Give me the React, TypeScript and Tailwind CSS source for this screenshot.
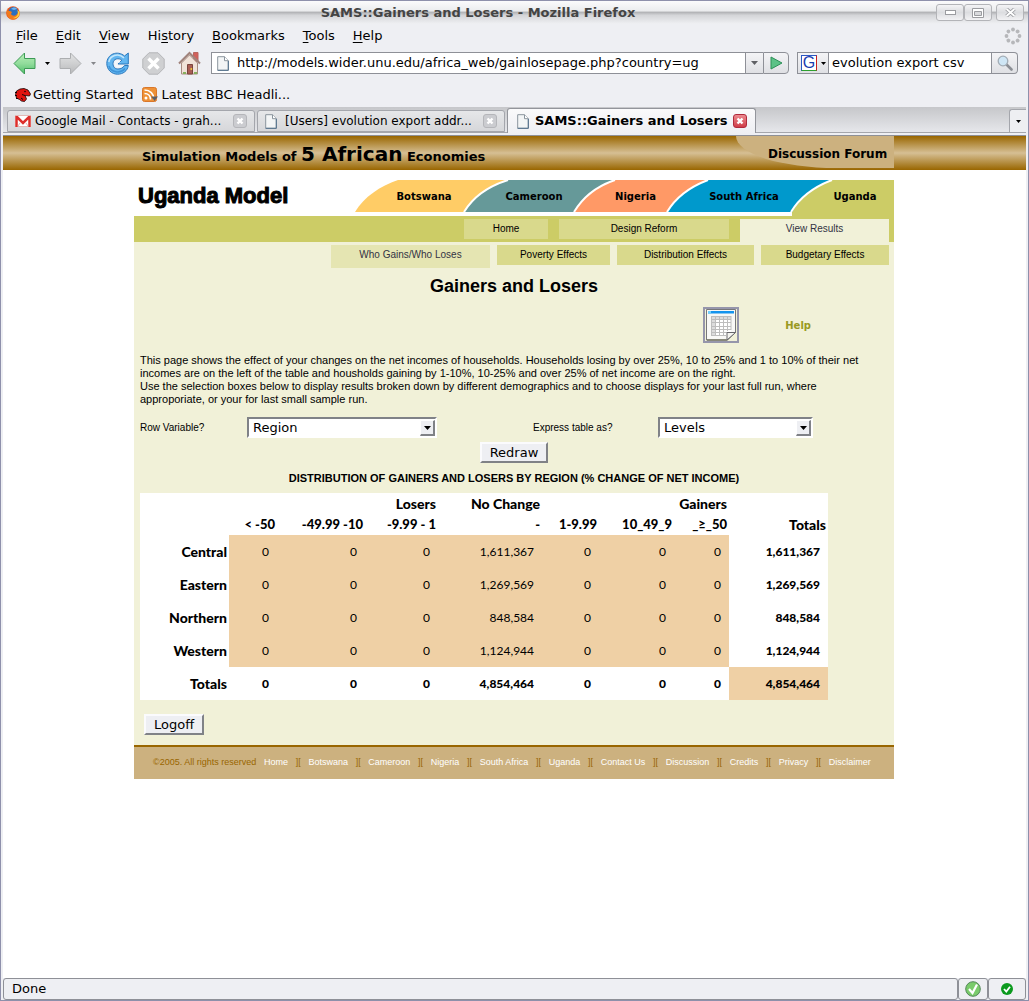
import React from "react";

const UI = "font-['DejaVu_Sans',sans-serif]";
const ARIAL = "font-['Liberation_Sans',Arial,sans-serif]";

function Caret({ className }: { className: string }) {
  return (
    <svg viewBox="0 0 7 4" className={className} aria-hidden="true">
      <path d="M0 0h7L3.500 4z" fill="currentColor" />
    </svg>
  );
}

function FirefoxIcon() {
  return (
    <svg viewBox="0 0 14 14" className="size-[14px]" aria-hidden="true">
      <circle cx="7" cy="7" r="6.800" fill="#e8541a" />
      <circle cx="7.400" cy="5.800" r="4.800" fill="#2a6fc0" />
      <path d="M5 3c2-2 5-2 6 0l-3 1z" fill="#6db4ee" />
      <path d="M1 3c0 2 1 2 3 2l2 1-1 2c1 2 4 2 5 1 2-1 2-3 2-5 2 3 1 6-1 8s-6 2-8 0S0 6 1 3z" fill="#f07a1c" />
      <path d="M11 4c2 3 1 7-4 8 4 1 7-2 6.500-6z" fill="#ffd23a" />
    </svg>
  );
}

function ArrowIcon({ forward }: { forward?: boolean }) {
  const id = forward ? "fwd" : "back";
  return (
    <svg viewBox="0 0 23 23" className={forward ? "h-[23px] w-[23px] -scale-x-100" : "h-[23px] w-[23px]"} aria-hidden="true">
      <defs>
        <linearGradient id={id} x1="0" y1="0" x2="0" y2="1">
          <stop offset="0" stopColor={forward ? "#e2e3e4" : "#b7efb5"} />
          <stop offset="0.500" stopColor={forward ? "#cfd0d1" : "#92dc9c"} />
          <stop offset="1" stopColor={forward ? "#b7b8ba" : "#4fbf69"} />
        </linearGradient>
      </defs>
      <path d="M11.500 1v5.500h10.500v10H11.500V22L1 11.500z" fill={`url(#${id})`} stroke={forward ? "#acaeb0" : "#3c9a55"} />
    </svg>
  );
}

function ReloadIcon() {
  return (
    <svg viewBox="0 0 23 23" className="size-[23px]" aria-hidden="true">
      <path d="M22.300 1v11H12l3.800-3.800C13 5.500 7 6.500 7 11.500c0 4 2.500 5.500 5 5.500 3 0 5-1.200 6.500-3.500h3.800C21.500 19 17 22.200 11.500 22.200 5.500 22.200.8 17.500.8 11.500.8 2 11.500-2 18.500 4z" fill="#62b6f0" stroke="#2b78bd" />
      <path d="M2.800 10C4 3.500 12 .5 18 5.800" fill="none" stroke="#c3e6fb" strokeWidth="1.600" />
      <path d="M3 14c2 6 11 8.500 16 2.500" fill="none" stroke="#3d93d8" strokeWidth="1.600" />
      <path d="M8.500 11.500c0-4 5-4 6-1h-2.500c-2-1-2 3 0 3h5c-2 3-8.500 3-8.500-2z" fill="#f2f8fd" />
    </svg>
  );
}

function StopIcon() {
  return (
    <svg viewBox="0 0 23 23" className="size-[23px]" aria-hidden="true">
      <path d="M7 .8h9L22.200 7v9L16 22.200H7L.8 16V7z" fill="#cfd0d2" stroke="#b4b5b8" />
      <path d="M6.500 6.500l10 10M16.500 6.500l-10 10" stroke="#fff" strokeWidth="3.500" />
    </svg>
  );
}

function HomeIcon() {
  return (
    <svg viewBox="0 0 23 24" className="h-6 w-[23px]" aria-hidden="true">
      <path d="M15.500 1.500h4.500v9h-4.500z" fill="#d2605a" stroke="#b8655f" />
      <path d="M3.500 12L11.500 4l8 8v11h-16z" fill="#f0e2d8" stroke="#a88c80" />
      <path d="M1 12.500L11.500 2l10.500 10.500" fill="none" stroke="#a0837b" strokeWidth="2" />
      <path d="M9.500 13.500h5v9.500h-5z" fill="#a85d53" stroke="#7a443c" />
      <circle cx="13.300" cy="18" r="1" fill="#f2d13a" />
      <path d="M5 22h3M16 22h3" stroke="#86b05d" strokeWidth="2" />
    </svg>
  );
}

function PageIcon() {
  return (
    <svg viewBox="0 0 12 15" className="h-[15px] w-3 shrink-0" aria-hidden="true">
      <path d="M.7.7h6.800l3.800 4v9.600H.7z" fill="#f3f5f6" stroke="#8a949d" />
      <path d="M7.500.7v4h3.800" fill="#fff" stroke="#8a949d" />
      <path d="M11.300 5v9.300H.7" fill="none" stroke="#50708c" />
    </svg>
  );
}

function DinoIcon() {
  return (
    <svg viewBox="0 0 16 14" className="h-[14px] w-4" aria-hidden="true">
      <path d="M1.500 3L5 1l4-.5 4 1.500 2.500 4-1 2-4.500-.5L11.500 11l-2 2.500-3-.5-2-1.500L1.500 10 .5 6.500z" fill="#e0140f" stroke="#160404" strokeWidth="0.800" />
      <circle cx="10" cy="3.500" r="0.800" fill="#160404" />
      <path d="M0 4.500h2M0 7.500h2M1 10.500h2M10 7.500l-3-1M6 10l2 1.500" stroke="#160404" />
    </svg>
  );
}

function FeedIcon() {
  return (
    <svg viewBox="0 0 16 15" className="h-[15px] w-4" aria-hidden="true">
      <rect x="0.500" y="0.500" width="14" height="14" rx="2" fill="#ee9136" stroke="#d9772a" />
      <circle cx="4" cy="11" r="1.500" fill="#fff" />
      <path d="M2.500 6.500c3.500 0 6 2.500 6 6M2.500 3c5.500 0 9.500 4 9.500 9.500" fill="none" stroke="#fff" strokeWidth="1.600" />
      <path d="M9 9.500h7l-3.500 4.500z" fill="#5c5f66" />
    </svg>
  );
}

function MailIcon() {
  return (
    <svg viewBox="0 0 16 12" className="h-3 w-4 shrink-0" aria-hidden="true">
      <path d="M0 0h16v12H0z" fill="#fff" />
      <path d="M1.500 12V1.500L8 8l6.500-6.500V12" fill="none" stroke="#dd2f2b" strokeWidth="2.500" />
      <path d="M0 .5h16M3 11.500h10M5 8l-2 3M11 8l2 3" stroke="#e3b9b6" />
    </svg>
  );
}

function TabClose({ active, label }: { active?: boolean; label: string }) {
  return (
    <button
      type="button"
      aria-label={label}
      className={
        active
          ? "flex size-[14px] shrink-0 items-center justify-center rounded-[3px] border border-[#b02a3c] bg-linear-to-b from-[#ec8a90] to-[#cf3b48]"
          : "flex size-[14px] shrink-0 items-center justify-center rounded-[3px] border border-[#b5b6ba] bg-[#cbccd0]"
      }
    >
      <svg viewBox="0 0 8 8" className="size-2" aria-hidden="true">
        <path d="M1.500 1.500l5 5M6.500 1.500l-5 5" stroke="#fff" strokeWidth="2.400" />
      </svg>
    </button>
  );
}

function TitleBar() {
  const btn = "flex h-[17px] w-7 items-center justify-center rounded-[3px] border border-[#b3b4b8] bg-linear-to-b from-[#f4f4f6] via-[#dcdde0] to-[#f2f2f4] text-[#9b9ca0]";
  return (
    <header className="flex h-[23px] items-center bg-[linear-gradient(to_bottom,#fbfbfc_0%,#ebecee_42%,#b4b5b8_50%,#d4d5d8_62%,#eff0f3_100%)] pr-1 pl-[5px]">
      <FirefoxIcon />
      <h1 className="flex-1 text-center text-[13px] leading-[21px] font-bold text-[#444]">SAMS::Gainers and Losers - Mozilla Firefox</h1>
      <div className="flex">
        <button type="button" aria-label="Minimize" className={btn}>
          <svg viewBox="0 0 11 5" className="h-[5px] w-[11px]"><rect x="0.500" y="0.500" width="10" height="4" fill="#fff" stroke="currentColor" /></svg>
        </button>
        <button type="button" aria-label="Maximize" className={btn}>
          <svg viewBox="0 0 12 10" className="h-[10px] w-3"><path d="M.5.5h11v9H.5z" fill="#fff" stroke="currentColor" /><path d="M2.500 3.500h7v4h-7z" fill="#d9dadd" stroke="currentColor" /></svg>
        </button>
        <button type="button" aria-label="Close" className={`${btn} ml-1`}>
          <svg viewBox="0 0 11 9" className="h-[9px] w-[11px]"><path d="M1.500 1l8 7M9.500 1l-8 7" stroke="currentColor" strokeWidth="3.600" /><path d="M1.500 1l8 7M9.500 1l-8 7" stroke="#fff" strokeWidth="1.800" /></svg>
        </button>
      </div>
    </header>
  );
}

const MENUS = [
  ["", "F", "ile"],
  ["", "E", "dit"],
  ["", "V", "iew"],
  ["Hi", "s", "tory"],
  ["", "B", "ookmarks"],
  ["", "T", "ools"],
  ["", "H", "elp"],
];

function MenuBar() {
  return (
    <nav className="flex h-[23px] items-center justify-between pr-1 pl-[13px]">
      <div className="flex gap-[18px]">
        {MENUS.map(([a, b, c]) => (
          <button type="button" key={b + c}>
            {a}
            <span className="underline underline-offset-2">{b}</span>
            {c}
          </button>
        ))}
      </div>
      <svg viewBox="0 0 18 18" className="size-[18px]" aria-hidden="true">
        {[0, 45, 90, 135, 180, 225, 270, 315].map((a) => (
          <circle key={a} cx="9" cy="2.500" r="1.900" fill="#b6b7ba" transform={`rotate(${a} 9 9)`} />
        ))}
      </svg>
    </nav>
  );
}

function Toolbar() {
  const face = "border-[#8e9097] bg-linear-to-b from-[#f4f4f6] to-[#dfe0e4]";
  return (
    <div className="flex h-8 items-center pr-2 pl-[10px]">
      <button type="button" aria-label="Back"><ArrowIcon /></button>
      <button type="button" aria-label="Back history" className="ml-[9px] text-black"><Caret className="h-[3px] w-[5px]" /></button>
      <button type="button" aria-label="Forward" className="ml-[9px]"><ArrowIcon forward /></button>
      <button type="button" aria-label="Forward history" className="ml-[9px] text-[#85868a]"><Caret className="h-[3px] w-[5px]" /></button>
      <button type="button" aria-label="Reload" className="ml-[10px]"><ReloadIcon /></button>
      <button type="button" aria-label="Stop" className="ml-[13px]"><StopIcon /></button>
      <button type="button" aria-label="Home" className="ml-[13px]"><HomeIcon /></button>
      <div className="ml-[10px] flex h-[22px] flex-1">
        <div className="flex flex-1 items-center gap-2 border border-[#8e9097] bg-white px-[5px]">
          <PageIcon />
          <input aria-label="Address" className="min-w-0 flex-1 outline-none" defaultValue="http://models.wider.unu.edu/africa_web/gainlosepage.php?country=ug" />
        </div>
        <button type="button" aria-label="Address history" className={`flex w-[17px] items-center justify-center border-y text-[#5f6064] ${face}`}>
          <Caret className="h-1 w-[7px]" />
        </button>
        <button type="button" aria-label="Go" className={`flex w-[26px] items-center justify-center rounded-r-[4px] border ${face}`}>
          <svg viewBox="0 0 13 14" className="h-[14px] w-[13px]"><path d="M1 1l11 6L1 13z" fill="#5cc287" stroke="#2c8f57" /></svg>
        </button>
      </div>
      <div className="ml-2 flex h-[22px] w-[221px]">
        <button type="button" aria-label="Search engine" className={`flex w-[31px] items-center gap-1 border-y border-l pl-[3px] ${face}`}>
          <span className="flex size-4 items-center justify-center border border-t-[#2b58c4] border-r-[#c92020] border-b-[#2ea02e] border-l-[#2b58c4] bg-white font-['Liberation_Sans',sans-serif] text-base leading-none text-[#1a3cb0]">G</span>
          <Caret className="h-[3px] w-[5px]" />
        </button>
        <input aria-label="Search" className="min-w-0 flex-1 border border-[#8e9097] bg-white px-[3px] outline-none" defaultValue="evolution export csv" />
        <button type="button" aria-label="Search the web" className={`flex w-[26px] items-center justify-center rounded-r-[4px] border-y border-r ${face}`}>
          <svg viewBox="0 0 16 16" className="size-4"><path d="M9 9l5.500 5.500" stroke="#8c8f95" strokeWidth="2.600" strokeLinecap="round" /><circle cx="6" cy="6" r="4.800" fill="#cfe6f5" stroke="#a3adb6" strokeWidth="1.300" /></svg>
        </button>
      </div>
    </div>
  );
}

function TabStrip() {
  const idle = "mr-0.5 flex h-[22px] w-[248px] items-center rounded-t-[3px] border border-[#a4a6ac] bg-linear-to-b from-[#e6e7e9] to-[#d6d7da] px-[7px] text-xs";
  return (
    <div className="border-b border-[#8e9097] bg-[#eeeff3] pb-0.5">
      <div className="flex h-[26px] items-end border-b border-[#a4a6ac] bg-linear-to-b from-[#c6c7ca] to-[#e6e7eb] pl-1 whitespace-nowrap">
        <div className={idle}>
          <MailIcon />
          <span className="min-w-0 flex-1 pl-1">Google Mail - Contacts - grah...</span>
          <TabClose label="Close Google Mail" />
        </div>
        <div className={idle}>
          <PageIcon />
          <span className="min-w-0 flex-1 pl-2">[Users] evolution export addr...</span>
          <TabClose label="Close Users" />
        </div>
        <div className="-mb-px flex h-[25px] w-[249px] items-center rounded-t-[3px] border border-b-0 border-[#93959b] bg-linear-to-b from-[#fafafb] to-[#eeeff3] pr-2 pl-[9px] font-bold">
          <PageIcon />
          <span className="flex-1 pl-[6px]">SAMS::Gainers and Losers</span>
          <TabClose active label="Close SAMS" />
        </div>
        <button type="button" aria-label="List all tabs" className="ml-auto flex h-[23px] w-[17px] items-center justify-center rounded-tl-[3px] border-t border-l border-[#a4a6ac] bg-[#eeeff2]">
          <Caret className="h-[3px] w-[5px]" />
        </button>
      </div>
    </div>
  );
}

function SiteBanner() {
  return (
    <div className="bg-[linear-gradient(to_bottom,#996600_0%,#d6bf94_50%,#996600_100%)] pr-px">
      <div className="mx-auto flex h-[34px] max-w-[760px] items-start justify-between whitespace-nowrap">
        <p className="pt-1 pl-2 text-[13px] leading-[34px] font-bold">
          Simulation Models of <span className="text-xl leading-none">5 African</span> Economies
        </p>
        <a href="#forum" className="h-8 w-[158px] bg-[#ccb17f] pl-8 text-xs leading-9 font-bold [border-bottom-left-radius:100px_32px]">
          Discussion Forum
        </a>
      </div>
    </div>
  );
}

function CountryTabs() {
  return (
    <div className="flex h-9 items-start justify-between">
      <h2 className="pl-1 font-['Liberation_Sans',Arial,sans-serif] text-[22px] leading-8 font-black whitespace-nowrap [-webkit-text-stroke:1px_#000]">Uganda Model</h2>
      <nav className="relative h-9 w-[540px]">
        <svg viewBox="0 0 540 36" className="absolute inset-0 h-9 w-[540px]" aria-hidden="true">
          <path d="M1 32C10 17 26 6 44 0h118v32z" fill="#ffcc66" />
          <path d="M110 32C119 17 135 6 154 0h112v32z" fill="#669999" />
          <path d="M220 32C229 17 243 6 261 0h95v32z" fill="#ff9966" />
          <path d="M313 32C322 17 338 6 354 0h125v32z" fill="#0099cc" />
          <path d="M438 36v-4C447 17 462 6 478 0h62v36z" fill="#cccc66" />
          <path d="M110 32C119 17 135 6 154 0M220 32C229 17 243 6 261 0M313 32C322 17 338 6 354 0M437 32C446 17 462 6 478 0" fill="none" stroke="#fff" strokeWidth="2" />
        </svg>
        <div className="relative grid h-8 grid-cols-[110px_110px_93px_124px_88px] items-center pl-[15px] text-center text-[10px] font-bold">
          <a href="#botswana">Botswana</a>
          <a href="#cameroon">Cameroon</a>
          <a href="#nigeria">Nigeria</a>
          <a href="#south-africa">South Africa</a>
          <a href="#uganda" className="pl-[10px]">Uganda</a>
        </div>
      </nav>
    </div>
  );
}

function SectionNav() {
  const item = "h-5 bg-[#d9d98c] text-center leading-5";
  return (
    <div className={`${ARIAL} text-[10px]`}>
      <nav className="flex h-[26px] justify-end gap-[11px] bg-[#cccc66] pt-[3px] pr-[5px]">
        <a href="#home" className={`${item} w-[84px]`}>Home</a>
        <a href="#design" className={`${item} w-[170px]`}>Design Reform</a>
        <a href="#results" className="h-[23px] w-[149px] bg-[#f1f1d8] text-center leading-5 text-[#333344]">View Results</a>
      </nav>
      <nav className="flex h-[26px] justify-end gap-[7px] pt-[3px] pr-[5px]">
        <a href="#gains" className="h-[23px] w-[159px] bg-[#e5e5b2] text-center leading-5 text-[#333344]">Who Gains/Who Loses</a>
        <a href="#poverty" className={`${item} w-[113px]`}>Poverty Effects</a>
        <a href="#distribution" className={`${item} w-[137px]`}>Distribution Effects</a>
        <a href="#budgetary" className={`${item} w-[128px]`}>Budgetary Effects</a>
      </nav>
    </div>
  );
}

function SpreadsheetIcon() {
  return (
    <svg viewBox="0 0 32 32" className="size-8" aria-hidden="true">
      <path d="M1.500.5h29v23l-8 7.500h-21z" fill="#f8f8f6" stroke="#77777a" />
      <path d="M3 2h26v2.500H3z" fill="#1494ee" />
      <path d="M3 2h3v2.500H3z" fill="#6fd0ff" />
      <path d="M6 7h20v20H6z" fill="#fff" />
      <path d="M6 7h20v3H6zM6 7h4v20H6z" fill="#dcdcdc" />
      <path d="M6 7.500h20M6 10.500h20M6 13.500h20M6 17.500h20M6 20.500h20M6 23.500h16M6 26.500h15M6.500 7v20M10.500 7v20M14.500 7v20M18.500 7v20M22.500 7v15M26 7v14" stroke="#bdbdbd" fill="none" />
      <path d="M30.500 23.500h-8.500v7.500z" fill="#f4f4f0" stroke="#66666a" />
      <path d="M2 31h20" stroke="#88887a" strokeWidth="2" />
    </svg>
  );
}

function SelectBox({ id, value, options, className }: { id: string; value: string; options: string[]; className: string }) {
  return (
    <div className={`relative ${className}`}>
      <select id={id} defaultValue={value} className={`${UI} h-[21px] w-full appearance-none border-2 border-t-[#808287] border-r-white border-b-white border-l-[#808287] bg-white pl-1 text-[13px] leading-4 text-black`}>
        {options.map((o) => (
          <option key={o}>{o}</option>
        ))}
      </select>
      <span className="pointer-events-none absolute top-[3px] right-0.5 flex h-4 w-[15px] items-center justify-center border border-r-2 border-b-2 border-[#808287] border-t-white border-l-white bg-[#eeeff3]">
        <Caret className="h-1 w-[7px]" />
      </span>
    </div>
  );
}

const BEVEL = "h-[21px] border-2 border-t-[#fbfbfd] border-r-[#808287] border-b-[#808287] border-l-[#fbfbfd] bg-[#eeeff3] px-2 text-[13px] leading-4";

const ROWS: [string, string][] = [
  ["Central", "1,611,367"],
  ["Eastern", "1,269,569"],
  ["Northern", "848,584"],
  ["Western", "1,124,944"],
];

function ResultsTable() {
  const word = "pr-0.5 text-sm font-black";
  return (
    <table className="w-[688px] table-fixed border-collapse bg-white text-right font-['Lato',sans-serif] text-xs whitespace-nowrap">
      <colgroup>
        <col className="w-[89px]" />
        <col className="w-12" />
        <col className="w-[88px]" />
        <col className="w-[73px]" />
        <col className="w-[104px]" />
        <col className="w-[57px]" />
        <col className="w-[75px]" />
        <col className="w-[55px]" />
        <col className="w-[99px]" />
      </colgroup>
      <thead>
        <tr className="h-[21px]">
          <th />
          <th colSpan={3} className={word}>Losers</th>
          <th className={word}>No Change</th>
          <th colSpan={3} className={word}>Gainers</th>
          <th />
        </tr>
        <tr className="h-[21px]">
          <th />
          {["< -50", "-49.99 -10", "-9.99 - 1", "-", "1-9.99", "10_49_9", "_≥_50"].map((h) => (
            <th key={h} className="pr-0.5 text-[13px] font-black">{h}</th>
          ))}
          <th className={word}>Totals</th>
        </tr>
      </thead>
      <tbody>
        {ROWS.map(([name, total]) => (
          <tr key={name} className="h-[33px] bg-[#efd0a5]">
            <th className={`${word} bg-white`}>{name}</th>
            {["0", "0", "0", total, "0", "0", "0"].map((v, i) => (
              <td key={i} className="pr-2">{v}</td>
            ))}
            <td className="bg-white pr-2 font-black">{total}</td>
          </tr>
        ))}
        <tr className="h-[33px] font-black">
          <th className={word}>Totals</th>
          {["0", "0", "0", "4,854,464", "0", "0", "0"].map((v, i) => (
            <td key={i} className="pr-2">{v}</td>
          ))}
          <td className="bg-[#efd0a5] pr-2">4,854,464</td>
        </tr>
      </tbody>
    </table>
  );
}

const FOOTER = ["Home", "Botswana", "Cameroon", "Nigeria", "South Africa", "Uganda", "Contact Us", "Discussion", "Credits", "Privacy", "Disclaimer"];

function Footer() {
  return (
    <footer className={`${ARIAL} flex h-[34px] items-center justify-between border-t-2 border-[#996600] bg-[#ccb17f] pr-[23px] pl-[19px] text-[9px] whitespace-nowrap text-[#996600]`}>
      <span>©2005. All rights reserved</span>
      {FOOTER.map((f, i) => (
        <React.Fragment key={f}>
          {i > 0 && <span>][</span>}
          <a href={`#${f}`} className="text-white">{f}</a>
        </React.Fragment>
      ))}
    </footer>
  );
}

export default function App() {
  return (
    <div className={`${UI} flex min-h-screen flex-col border border-[#8e90ab] bg-[#eeeff3] text-[13px] text-black`}>
      <TitleBar />
      <div className="flex flex-1 flex-col px-0.5">
        <MenuBar />
        <Toolbar />
        <div className="flex h-7 items-center pt-[3px] pl-3">
          <a href="#start" className="flex items-center gap-0.5"><DinoIcon />Getting Started</a>
          <a href="#bbc" className="ml-2 flex items-center gap-1"><FeedIcon />Latest BBC Headli...</a>
        </div>
        <TabStrip />
        <main className="flex-1 bg-white">
          <SiteBanner />
          <div className="pt-[10px] pr-px">
            <div className="mx-auto max-w-[760px]">
              <CountryTabs />
              <div className="bg-[#f1f1d8]">
                <SectionNav />
                <div className={`${ARIAL} px-[6px]`}>
                  <h3 className="pt-1 pb-2 text-center text-lg leading-7 font-bold">Gainers and Losers</h3>
                  <div className="mt-[-1px] flex h-[36px] items-center justify-end pr-[77px]">
                    <a href="#spreadsheet" aria-label="Spreadsheet" className="border-2 border-[#9696ab]"><SpreadsheetIcon /></a>
                    <a href="#help" className={`${UI} ml-[46px] text-[10px] font-bold text-[#999922]`}>Help</a>
                  </div>
                  <p className="mt-[11px] max-w-[730px] text-[11px] leading-[13px]">
                    This page shows the effect of your changes on the net incomes of households. Households losing by over 25%, 10 to 25% and 1 to 10% of their net incomes are on the left of the table and housholds gaining by 1-10%, 10-25% and over 25% of net income are on the right.
                    <br />
                    Use the selection boxes below to display results broken down by different demographics and to choose displays for your last full run, where approporiate, or your for last small sample run.
                  </p>
                  <div className="mt-[11px] grid grid-cols-[107px_286px_125px_1fr] items-center text-[10px]">
                    <label htmlFor="row-variable">Row Variable?</label>
                    <SelectBox id="row-variable" value="Region" options={["Region"]} className="w-[190px]" />
                    <label htmlFor="express">Express table as?</label>
                    <SelectBox id="express" value="Levels" options={["Levels"]} className="w-[155px]" />
                  </div>
                  <div className="mt-1 flex justify-center">
                    <button type="button" className={`${UI} ${BEVEL}`}>Redraw</button>
                  </div>
                  <h4 className="py-[5px] text-center text-[11px] leading-5 font-bold">DISTRIBUTION OF GAINERS AND LOSERS BY REGION (% CHANGE OF NET INCOME)</h4>
                  <ResultsTable />
                  <div className="pt-[14px] pb-[10px] pl-1">
                    <button type="button" className={`${UI} ${BEVEL}`}>Logoff</button>
                  </div>
                </div>
              </div>
              <Footer />
            </div>
          </div>
        </main>
      </div>
      <div className="flex h-[22px] px-0.5">
        <div className="flex flex-1 items-center rounded-[3px] border border-[#8e9097] pl-2">Done</div>
        <div className="flex w-[30px] items-center justify-center rounded-[3px] border border-[#8e9097]">
          <svg viewBox="0 0 16 16" className="size-4"><circle cx="8" cy="8" r="7.300" fill="#7acb6b" stroke="#55875a" /><path d="M4 8l3.500 4L12 3.500" fill="none" stroke="#fff" strokeWidth="2.200" /></svg>
        </div>
        <div className="flex w-[38px] items-center justify-center rounded-[3px] border border-[#8e9097]">
          <svg viewBox="0 0 12 12" className="size-3"><circle cx="6" cy="6" r="6" fill="#0b9a1e" /><path d="M3 6l2.300 2.500L9 3.800" fill="none" stroke="#fff" strokeWidth="1.800" /></svg>
        </div>
      </div>
    </div>
  );
}
